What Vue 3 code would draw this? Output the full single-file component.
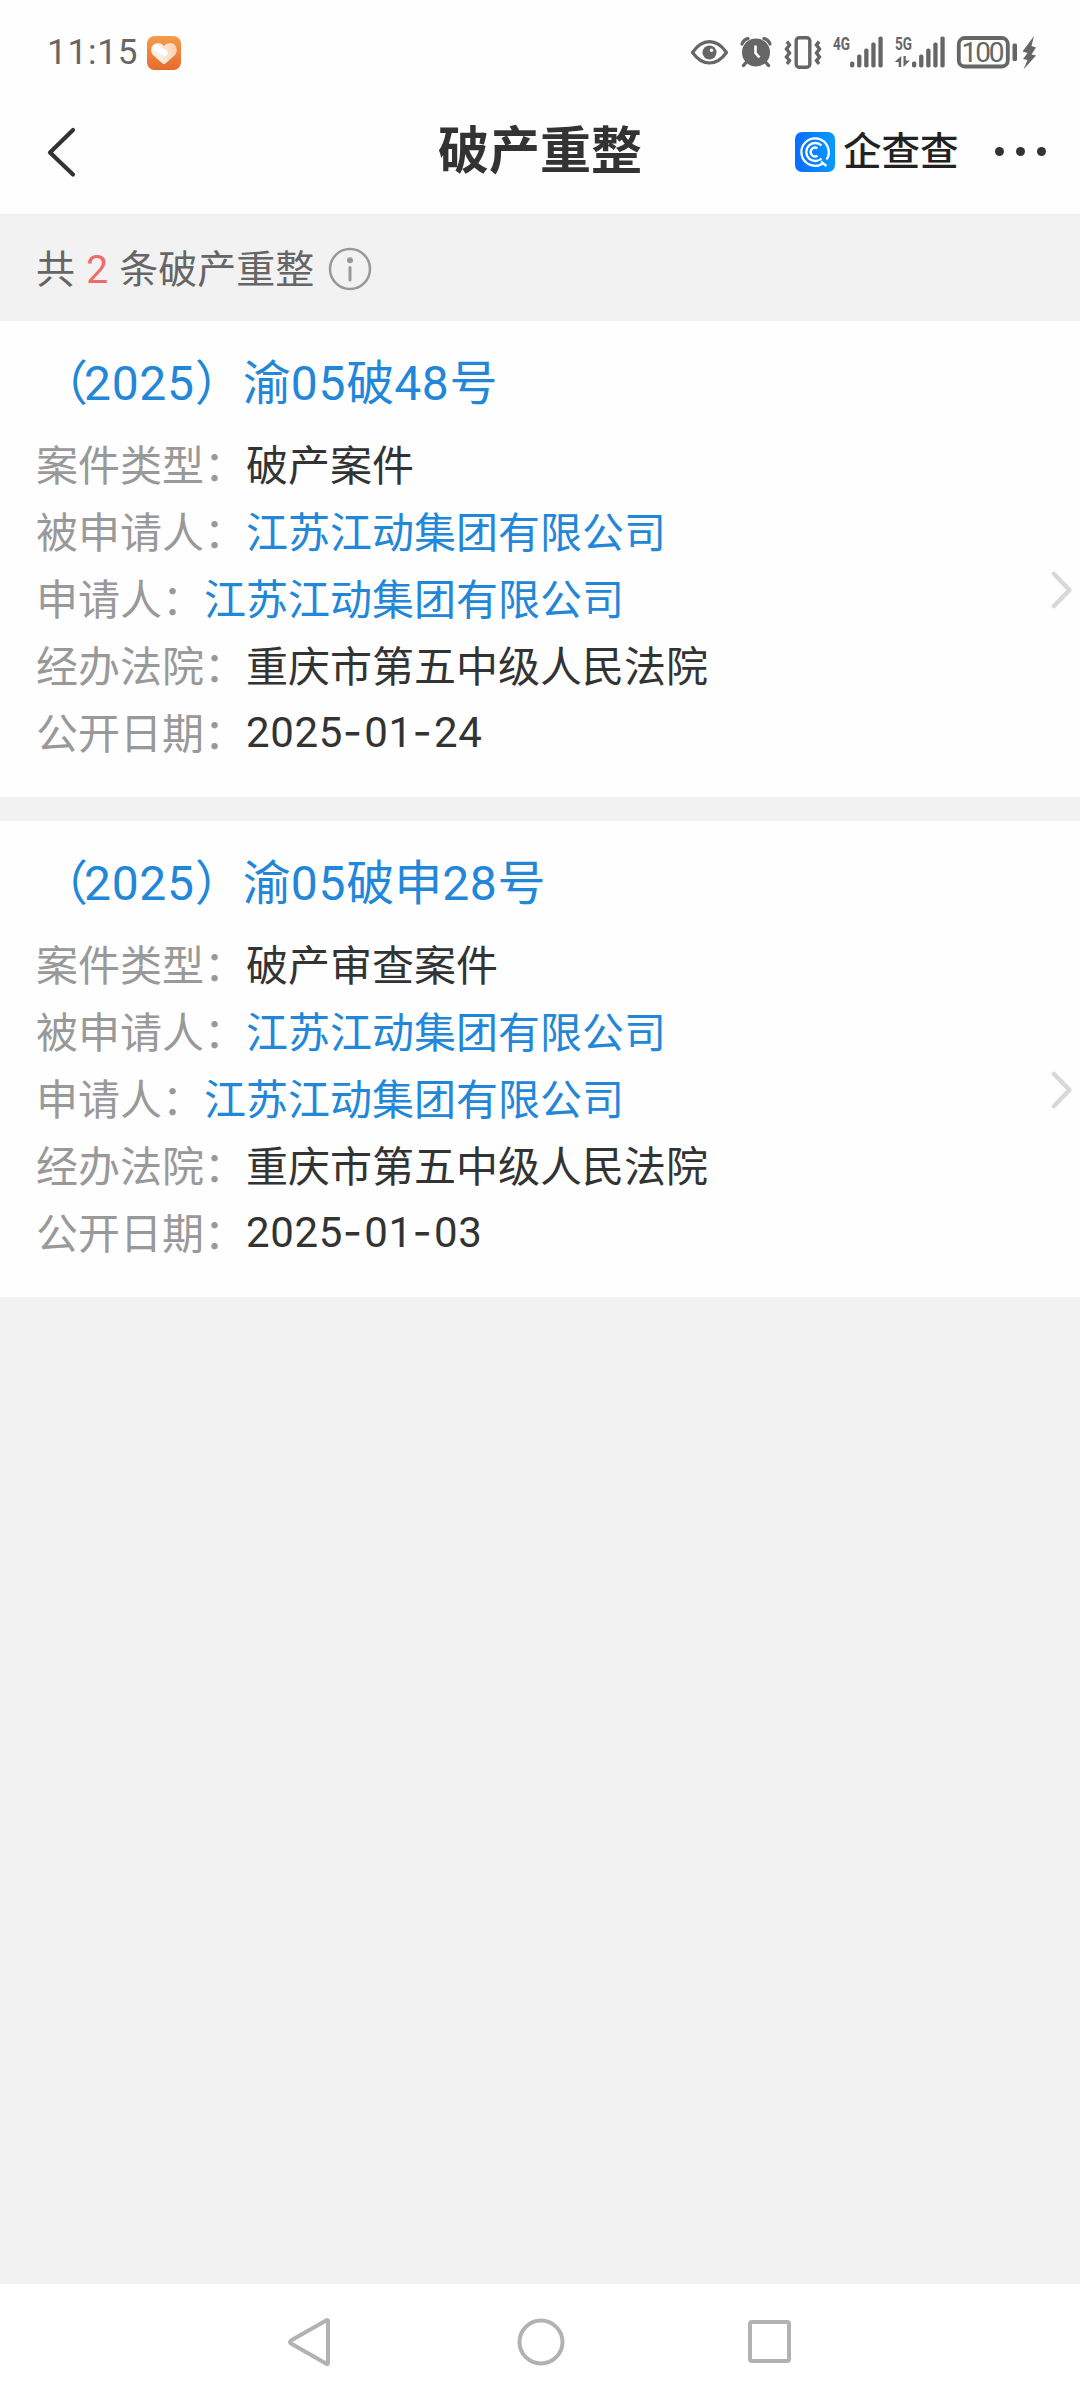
<template>
  <div class="page">
    <div class="status-bar">
      <span class="clock">11:15</span>
      <svg class="app-icon" width="34" height="34" viewBox="0 0 34 34">
        <defs>
          <linearGradient id="heartBg" x1="0" y1="0" x2="0" y2="1">
            <stop offset="0" stop-color="#f39d4b" />
            <stop offset="1" stop-color="#e76a2e" />
          </linearGradient>
          <linearGradient id="heartFill" x1="0.3" y1="0.3" x2="1" y2="0.2">
            <stop offset="0" stop-color="#fdeee3" />
            <stop offset="1" stop-color="#f9cfae" />
          </linearGradient>
        </defs>
        <rect width="34" height="34" rx="7.5" fill="url(#heartBg)" />
        <path
          d="M17 10 C14 6 8.500 6 5.800 9.300 C3.200 12.500 4 17 6.500 19.500 L15 27 Q17 28.800 19 27 L27.500 19.500 C30 17 30.800 12.500 28.200 9.300 C25.500 6 20 6 17 10 Z"
          fill="url(#heartFill)"
        />
        <path d="M9.500 12 L17.500 17" stroke="#fff" stroke-width="6.500" stroke-linecap="round" />
      </svg>

      <div class="status-icons">
        <svg width="39" height="36" viewBox="0 0 39 36">
          <path
            d="M2.500 17.500 Q10 6.700 19.500 6.700 T36.500 17.500 Q29 28 19.500 28 T2.500 17.500 Z"
            fill="none" stroke="#666" stroke-width="3.200" stroke-linejoin="round"
          />
          <circle cx="19.500" cy="17.500" r="7" fill="#666" />
          <circle cx="21.500" cy="15.300" r="1.700" fill="#fff" />
        </svg>

        <svg width="36" height="36" viewBox="0 0 36 36">
          <g fill="none" stroke="#666" stroke-linecap="round">
            <path d="M4 9 Q5.500 4.500 10 3.600" stroke-width="3.200" />
            <path d="M32 9 Q30.500 4.500 26 3.600" stroke-width="3.200" />
            <path d="M8.500 27 L5.500 30.500 M27.500 27 L30.500 30.500" stroke-width="3.400" />
          </g>
          <circle cx="18" cy="17.500" r="14" fill="#666" />
          <path d="M17.500 10.500 V18 L21.500 22.500" fill="none" stroke="#fff" stroke-width="2.600" />
        </svg>

        <svg width="40" height="36" viewBox="0 0 40 36">
          <rect x="13.200" y="2.700" width="13.600" height="29.600" rx="3" fill="none" stroke="#666" stroke-width="3.400" />
          <path
            d="M4 6.500 L6.500 10 L3.500 14 L6.500 18 L3.500 22 L6.500 25.500 L4 29 M36 6.500 L33.500 10 L36.500 14 L33.500 18 L36.500 22 L33.500 25.500 L36 29"
            fill="none" stroke="#666" stroke-width="3.400"
          />
        </svg>

        <svg v-for="s in signals" :key="s" width="53" height="52" viewBox="0 -8 53 52">
          <text x="1" y="15" textLength="17" lengthAdjust="spacingAndGlyphs" class="net">{{ s }}</text>
          <rect
            v-for="(h, i) in [6, 13, 19, 25, 31]" :key="h"
            :x="18 + i * 7.1" :y="32.5 - h" width="4.300" :height="h" rx="1.800" fill="#666"
          />
          <path v-if="s === '5G'" d="M7.200 21 V32 H4.700 V27 H0.700 Z M9.500 21 H11.800 V25.500 H15.800 L9.500 32 Z" fill="#666" />
        </svg>

        <svg width="82" height="36" viewBox="0 0 82 36">
          <rect x="2.800" y="3" width="49" height="28.500" rx="6" fill="none" stroke="#666" stroke-width="3.800" />
          <text x="5.500" y="26.800" textLength="43" lengthAdjust="spacing" class="battery">100</text>
          <rect x="56.500" y="8.500" width="4.500" height="17.500" rx="1.500" fill="#666" />
          <path d="M78 1 L66.500 16.500 L71.500 18 L67 24 L71.500 25 L67.500 34.500 L80 20.500 L75.500 19.500 L80 12.500 L75.500 11 Z" fill="#666" />
        </svg>
      </div>
    </div>

    <header class="nav-header">
      <div class="nav-side">
        <svg width="30" height="52" viewBox="0 0 30 52">
          <path d="M27 4 L4 26.500 L27 48.500" fill="none" stroke="#333" stroke-width="4.200" stroke-linecap="round" stroke-linejoin="round" />
        </svg>
      </div>
      <h1 class="nav-title">破产重整</h1>
      <div class="nav-side nav-right">
        <svg class="brand-icon" width="40" height="40" viewBox="0 0 40 40">
          <defs>
            <linearGradient id="brandBg" x1="0" y1="0" x2="1" y2="0">
              <stop offset="0" stop-color="#0a6cff" />
              <stop offset="1" stop-color="#059bff" />
            </linearGradient>
          </defs>
          <rect width="40" height="40" rx="7" fill="url(#brandBg)" />
          <g fill="none" stroke="#fff" stroke-width="2.300">
            <path d="M31.600 27.500 A13.700 13.700 0 1 0 26.500 32.200 L27 30.500 L31.500 34" />
            <path d="M26.500 13.500 A9 9 0 1 0 26.500 26.500" />
            <path d="M22.500 16.300 A4.400 4.400 0 1 0 22.500 23.700" />
          </g>
        </svg>
        <span class="brand">企查查</span>
        <span class="dots"><i></i><i></i><i></i></span>
      </div>
    </header>

    <div class="summary">
      <span class="summary-text">共 <em>2</em> 条破产重整</span>
      <svg width="44" height="44" viewBox="0 0 44 44">
        <circle cx="22" cy="22" r="20" fill="none" stroke="#999" stroke-width="2.500" />
        <circle cx="22" cy="13.200" r="3" fill="#999" />
        <path d="M22 20.500 V33" stroke="#999" stroke-width="3" stroke-linecap="round" />
      </svg>
    </div>

    <section v-for="item in cases" :key="item.no.join('')" class="card">
      <h2 class="case-no">
        <span v-for="(part, i) in item.no" :key="i" :class="partClass(part)">{{ part }}</span>
      </h2>
      <div class="card-body">
        <dl>
          <div v-for="row in item.rows" :key="row.label" class="row">
            <dt>{{ row.label }}<span class="colon">：</span></dt>
            <dd v-if="row.date" class="date">
              <template v-for="(part, i) in row.date" :key="i"><b v-if="i">-</b>{{ part }}</template>
            </dd>
            <dd v-else :class="{ link: row.link }">{{ row.value }}</dd>
          </div>
        </dl>
        <svg width="26" height="42" viewBox="0 0 26 42">
          <path d="M5 5 L20.500 21 L5 37" fill="none" stroke="#d8d8d8" stroke-width="4.600" stroke-linecap="round" stroke-linejoin="round" />
        </svg>
      </div>
    </section>

    <nav class="system-nav">
      <svg width="50" height="50" viewBox="0 0 50 50">
        <path d="M42 3.500 V46.500 Q41.500 47.500 40 46.500 L5 26.500 Q3 25 5 23.500 L40 3.500 Q41.500 2.500 42 3.500 Z" fill="none" stroke="#b2b2b2" stroke-width="4" />
      </svg>
      <svg width="50" height="50" viewBox="0 0 50 50">
        <circle cx="25" cy="25" r="21.500" fill="none" stroke="#b2b2b2" stroke-width="4" />
      </svg>
      <svg width="50" height="50" viewBox="0 0 50 50">
        <rect x="5" y="5" width="39" height="39" rx="2" fill="none" stroke="#b2b2b2" stroke-width="4" />
      </svg>
    </nav>
  </div>
</template>

<script setup>
const signals = ["4G", "5G"];

const company = "江苏江动集团有限公司";
const court = "重庆市第五中级人民法院";

function buildRows(type, date) {
  return [
    { label: "案件类型", value: type },
    { label: "被申请人", value: company, link: true },
    { label: "申请人", value: company, link: true },
    { label: "经办法院", value: court },
    { label: "公开日期", date: date.split("-") },
  ];
}

// numbers and brackets are split out so they can get their own spacing
const cases = [
  {
    no: ["（", "2025", "）", "渝", "05", "破", "48", "号"],
    rows: buildRows("破产案件", "2025-01-24"),
  },
  {
    no: ["（", "2025", "）", "渝", "05", "破申", "28", "号"],
    rows: buildRows("破产审查案件", "2025-01-03"),
  },
];

function partClass(part) {
  if (/\d/.test(part)) return "digits";
  if (part === "（") return "bracket-open";
  return "";
}
</script>

<style>
body {
  margin: 0;
  background: #f2f2f2;
}
</style>

<style scoped>
.page {
  display: flex;
  flex-direction: column;
  width: 1080px;
  height: 2400px;
  background: #f2f2f2;
  color: #333;
  font-family: Roboto, "Noto Sans CJK SC", sans-serif;
}

svg {
  display: block;
  flex-shrink: 0;
}

.status-bar {
  display: flex;
  align-items: center;
  height: 106px;
  padding: 0 42px 0 47px;
  box-sizing: border-box;
  background: #fefefe;
}

.clock {
  width: 100px;
  font-size: 35px;
  line-height: 40px;
  letter-spacing: 0.8px;
  color: #666;
}

.status-icons {
  display: flex;
  align-items: center;
  gap: 9px;
  margin-left: auto;
}

.net {
  font-size: 18px;
  font-weight: 700;
  fill: #666;
}

.battery {
  font-size: 28px;
  fill: #666;
}

.nav-header {
  display: flex;
  align-items: center;
  height: 110px;
  padding: 0 34px 17px 46px;
  box-sizing: border-box;
  background: #fefefe;
  border-bottom: 2px solid #eee;
}

.nav-side {
  flex: 1;
}

.nav-title {
  margin: 1px 12px 0 0;
  font-size: 51px;
  font-weight: 700;
  line-height: 60px;
}

.nav-side:first-child {
  flex: 0 0 392px;
}

.nav-right {
  display: flex;
  align-items: center;
  justify-content: flex-end;
}

.brand {
  margin: 0 36px 0 8px;
  font-size: 38.500px;
  font-weight: 500;
  line-height: 44px;
  color: #222;
}

.dots {
  display: flex;
  gap: 11.500px;
}

.dots i {
  width: 9.500px;
  height: 9.500px;
  border-radius: 50%;
  background: #333;
}

.summary {
  display: flex;
  align-items: center;
  gap: 14px;
  height: 105px;
  padding-left: 36px;
  font-size: 39px;
  color: #666;
}

.summary-text {
  padding-bottom: 5px;
  word-spacing: 1.500px;
}

.summary em {
  font-style: normal;
  color: #f06a6a;
}

.card {
  height: 476px;
  padding: 31px 5px 0 36px;
  box-sizing: border-box;
  background: #fefefe;
}

.card + .card {
  margin-top: 24px;
}

.case-no {
  margin: 0 0 17px;
  font-size: 48px;
  font-weight: 400;
  line-height: 64px;
  color: #2287d8;
}

.digits {
  letter-spacing: 0.7px;
}

.bracket-open {
  margin: 0 -4px 0 4px;
}

.card-body {
  display: flex;
  justify-content: space-between;
}

.card-body > svg {
  margin-top: 136px;
}

dl {
  margin: 0;
}

.row {
  display: flex;
  height: 67px;
  font-size: 42px;
  line-height: 67px;
}

dt {
  color: #999;
}

dd {
  margin: 0;
}

.link {
  color: #2287d8;
}

.date {
  line-height: 62px;
  letter-spacing: 0.6px;
}

.date b {
  font-family: Inter, sans-serif;
  font-weight: 400;
  letter-spacing: 2px;
}

.system-nav {
  display: flex;
  align-items: center;
  justify-content: space-between;
  height: 116px;
  margin-top: auto;
  padding: 0 285px 0 286px;
  box-sizing: border-box;
  background: #fff;
}
</style>
